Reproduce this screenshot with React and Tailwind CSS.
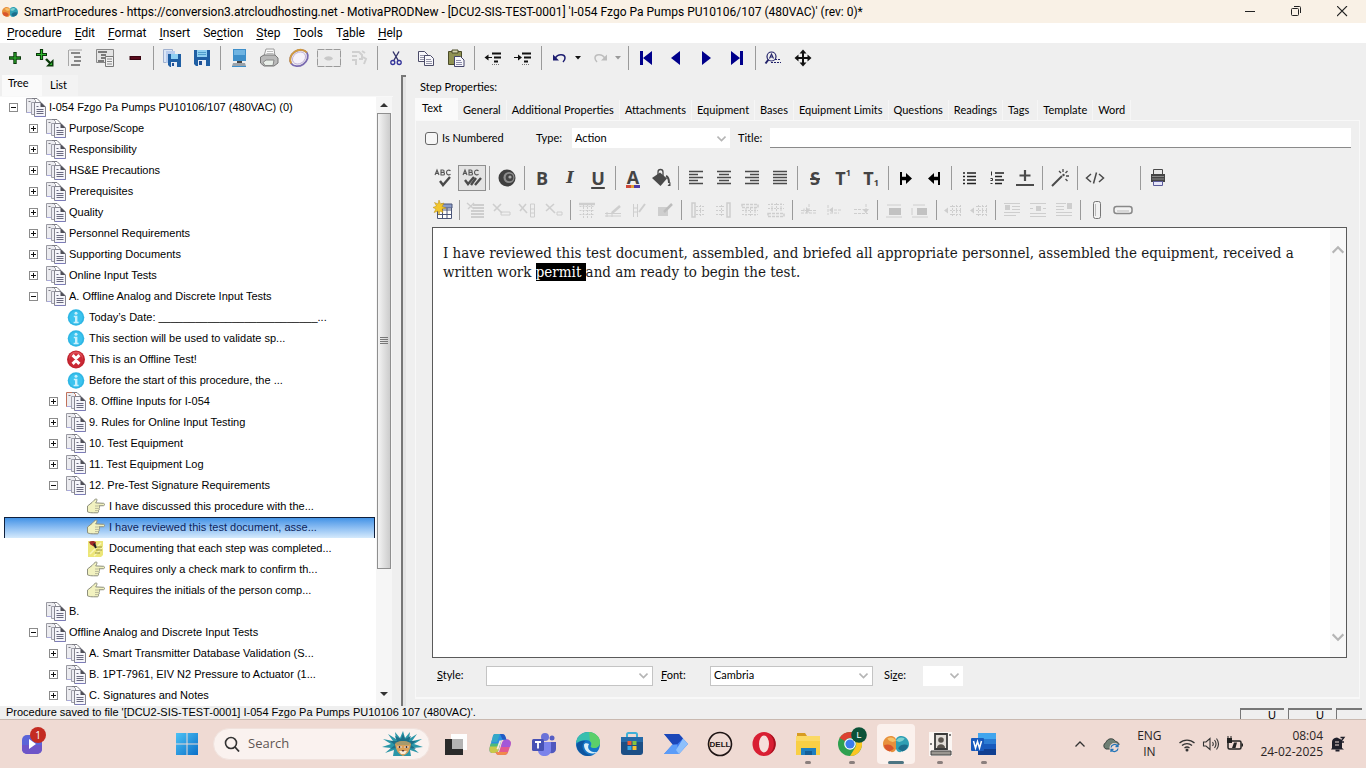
import React from "react";

const TREE = [
  [0, "minus", "doc", "I-054 Fzgo Pa Pumps PU10106/107 (480VAC) (0)"],
  [1, "plus", "doc", "Purpose/Scope"],
  [1, "plus", "doc", "Responsibility"],
  [1, "plus", "doc", "HS&E Precautions"],
  [1, "plus", "doc", "Prerequisites"],
  [1, "plus", "doc", "Quality"],
  [1, "plus", "doc", "Personnel Requirements"],
  [1, "plus", "doc", "Supporting Documents"],
  [1, "plus", "doc", "Online Input Tests"],
  [1, "minus", "doc", "A. Offline Analog and Discrete Input Tests"],
  [2, "", "info", "Today’s Date: __________________________..."],
  [2, "", "info", "This section will be used to validate sp..."],
  [2, "", "stop", "This is an Offline Test!"],
  [2, "", "info", "Before the start of this procedure, the ..."],
  [2, "plus", "docred", "8. Offline Inputs for I-054"],
  [2, "plus", "doc", "9. Rules for Online Input Testing"],
  [2, "plus", "doc", "10. Test Equipment"],
  [2, "plus", "doc", "11. Test Equipment Log"],
  [2, "minus", "doc", "12. Pre-Test Signature Requirements"],
  [3, "", "hand", "I have discussed this procedure with the..."],
  [3, "", "hand", "I have reviewed this test document, asse...", true],
  [3, "", "note", "Documenting that each step was completed..."],
  [3, "", "hand", "Requires only a check mark to confirm th..."],
  [3, "", "hand", "Requires the initials of the person comp..."],
  [1, "", "doc", "B."],
  [1, "minus", "doc", "Offline Analog and Discrete Input Tests"],
  [2, "plus", "doc", "A. Smart Transmitter Database Validation (S..."],
  [2, "plus", "doc", "B. 1PT-7961, EIV N2 Pressure to Actuator (1..."],
  [2, "plus", "doc", "C. Signatures and Notes"],
];

const INDENT = ["pl-2", "pl-7", "pl-12", "pl-[68px]"];

function Svg({ size = 20, children, className = "" }) {
  return (
    <svg width={size} height={size} viewBox={`0 0 ${size} ${size}`} className={`shrink-0 ${className}`} fill="none" aria-hidden="true">
      {children}
    </svg>
  );
}

function TreeIcon({ kind }) {
  if (kind === "info")
    return (
      <Svg>
        <circle cx="10" cy="9.500" r="8.300" fill="#2fb6e4" />
        <circle cx="10" cy="9.500" r="6.600" fill="#3cc3ee" />
        <circle cx="10" cy="5.300" r="1.500" fill="#c9f0fd" />
        <path d="M7.800 7.800h3.600v6h1.200v1.400H7.600v-1.400H9V9.200H7.800z" fill="#c9f0fd" />
      </Svg>
    );
  if (kind === "stop")
    return (
      <Svg>
        <circle cx="10" cy="9.500" r="9" fill="#c0232e" />
        <circle cx="10" cy="8.500" r="7" fill="#e0505a" />
        <circle cx="10" cy="10.500" r="7" fill="#cb2935" />
        <path d="M6.600 5.100 10 8.500l3.400-3.400M6.600 13.900 10 10.500l3.400 3.400M10 8.500v2" stroke="#fff" strokeWidth="3" />
      </Svg>
    );
  if (kind === "hand")
    return (
      <Svg>
        <path
          d="M1.500 9 6 5.500c1-1 3-3.600 4.200-3.600 1.200 0 .8 2.500-.6 4l8 .4c1.200.1 1.200 2.300 0 2.400l-4.600.1c.8.6.8 2-.1 2.400.6.8.4 2-.5 2.300.4.9 0 2.300-1 2.300H7.500c-2 0-3.600 0-6-1z"
          fill="#f2f2c0"
          stroke="#8d8f7c"
        />
        <path d="M9 9h3.600M9 11.400h3.300M9 13.600h2.800" stroke="#a9aa90" strokeWidth=".8" />
      </Svg>
    );
  if (kind === "note")
    return (
      <Svg>
        <path d="M2 2h15v14l-2 2H2z" fill="#ece678" />
        <path d="M4 15 15 4M8 17l9-9" stroke="#f9f6b8" strokeWidth="1.500" />
        <path d="M11 8h5M10 11h6M9 14h5" stroke="#9a9440" />
        <path d="M3 3c2-1.500 6-1.500 7 .5L8.500 8 4.500 5.500z" fill="#a12a2a" />
        <path d="M8 4.500 10 9" stroke="#222" strokeWidth="2" />
      </Svg>
    );
  const edge = kind === "docred" ? "#c0705a" : "#9a9aa2";
  return (
    <Svg>
      <path d="M.5.5h7l2 2v12h-9z" fill="#ececf0" stroke={edge} />
      <path d="M2.500 3.500h2" stroke="#77777f" />
      <path d="M1 14.500h5" stroke="#a9a9dc" />
      <path d="M6 .5h5l3.500 3.500v3" stroke="#7c7c84" />
      <path d="M5.500 4.500h4v12h-4z" fill="#ececf2" stroke="#a0a0aa" />
      <path d="M8.500 4.500h6.500l4.500 4.500v9.500h-11z" fill="#f5f5fa" stroke="#85858f" />
      <path d="M14.500 4v5h5z" fill="#4f4f58" />
      <path d="M10.500 8.500h2M10.500 11.500h7M10.500 13.500h7M10.500 15.500h7" stroke="#6a6a80" />
      <path d="M9 18.500h10.500" stroke="#7c7cb8" />
    </Svg>
  );
}

function TreeRow({ level, box, kind, text, selected }) {
  return (
    <li
      role="treeitem"
      aria-selected={!!selected}
      className={`ml-1 flex h-[21px] shrink-0 items-center whitespace-nowrap border-x border-t ${
        selected ? "border-[#10203c] bg-linear-to-b from-[#4293e6] to-[#d5eafc] pb-px text-[#0c1f5c]" : "border-transparent pb-px text-black"
      }`}
    >
      <div className={`-ml-[5px] flex items-center ${INDENT[level]}`}>
        <button type="button" aria-label={box ? "Toggle branch" : "Item"} className={`flex size-[10px] items-center justify-center ${box ? "" : "invisible"}`}>
          <Svg size={9}>
            <rect x=".5" y=".5" width="8" height="8" fill="#fff" stroke="#8b8b8b" />
            <path d={box === "plus" ? "M2 4.500h5M4.500 2v5" : "M2 4.500h5"} stroke="#111" />
          </Svg>
        </button>
        <span className="ml-2 mr-[3px] flex">
          <TreeIcon kind={kind} />
        </span>
        <span>{text}</span>
      </div>
    </li>
  );
}

function Logo({ size = 18 }) {
  return (
    <svg width={size} height={size} viewBox="0 0 24 24" className="shrink-0" aria-hidden="true">
      <path d="M0 12c0-4 3-7.500 7-7.500 3 0 5 1.500 5 4v8c-1 2-2 3-4 3-1-1-2 0-3-1-3-1-5-3-5-6.500z" fill="#e8903c" />
      <path d="M1 13c3-1 7-1 9 3-1 2-4 3-5 2.500-2.500-1-4-3-4-5.500z" fill="#d9552c" />
      <path d="M4 7c3-2 6-1 8 2-3 2-6 1-8-2z" fill="#f6c168" />
      <path d="M24 12c0-4-3-7.500-7-7.500-3 0-5 1.500-5 4v8c1 2 2 3 4 3 1-1 2 0 3-1 3-1 5-3 5-6.500z" fill="#2f9fb4" />
      <path d="M23 13c-3-1-7-1-9 3 1 2 4 3 5 2.500 2.500-1 4-3 4-5.500z" fill="#1c6d8c" />
      <path d="M20 7c-3-2-6-1-8 2 3 2 6 1 8-2z" fill="#7fd0cf" />
    </svg>
  );
}

/* ---------- main toolbar icons ---------- */
const I = {
  add: (<Svg><path d="M10 4v12M4 10h12" stroke="#0a3a0a" strokeWidth="3.400" /><path d="M10 5v10M5 10h10" stroke="#2fb52f" strokeWidth="1.200" /></Svg>),
  addSub: (
    <Svg>
      <path d="M6.500 1v11M1 6.500h11" stroke="#0a3a0a" strokeWidth="3.200" /><path d="M6.500 2v9M2 6.500h9" stroke="#2fb52f" strokeWidth="1.200" />
      <path d="m11 11 5 5" stroke="#0a3a0a" strokeWidth="2.400" /><path d="M18.500 11v7.500H11z" fill="#0a3a0a" /><path d="M17 14.500V17h-2.500z" fill="#2fb52f" />
    </Svg>
  ),
  outline: (<Svg><path d="M4 2h13M3.500 2v16" stroke="#a8a8a8" /><path d="M6 5h9M9 9h7M9 13h7M6 17h9" stroke="#666" strokeWidth="1.500" /></Svg>),
  form: (
    <Svg>
      <path d="M1.500 1.500h17v13h-17z" fill="#e4e4e4" stroke="#8a8a8a" /><path d="M3 4h9M6 7h5M6 10h4M3 13h6" stroke="#555" strokeWidth="1.500" />
      <path d="M10.500 8.500h8v10h-8z" fill="#f1f1f1" stroke="#777" /><path d="M12 11h5M12 13.500h5M12 16h5" stroke="#888" />
    </Svg>
  ),
  minus: (<Svg><path d="M4.500 10h11.500" stroke="#3b0612" strokeWidth="4" /><path d="M6 10h9" stroke="#7a1026" /></Svg>),
  save: (
    <Svg>
      <path d="M2 2h16v16H4l-2-2z" fill="#1f5fa4" /><path d="M5 2h10v7H5z" fill="#8fd0f2" /><path d="M6 4.500h8M6 6.500h8" stroke="#4f9dcc" />
      <path d="M6 12h8v6H6z" fill="#e8edf4" /><path d="M7 13h3v4H7z" fill="#1f4f94" />
    </Svg>
  ),
  saveAll: (
    <Svg>
      <path d="M1.500 1.500h9v13h-9z" fill="#dbe6f6" stroke="#9fb0cf" /><path d="M4 3h9v12H4z" fill="#b9cdee" />
      <path d="M6 6h13v13H8l-2-2z" fill="#1f5fa4" /><path d="M9 6h7v5H9z" fill="#8fd0f2" /><path d="M9 14h6v5H9z" fill="#e8edf4" /><path d="M10 15h2v3h-2z" fill="#1f4f94" />
    </Svg>
  ),
  monitor: (
    <Svg>
      <path d="M4 1h13v12H4z" fill="#3e8fca" /><path d="M5 2h11v5H5z" fill="#6fb4e2" /><path d="M8 13h5v2H8z" fill="#444" /><path d="M4 15h12l1 3H3z" fill="#9ba3aa" /><path d="M3 18.500h14" stroke="#3e8fca" />
    </Svg>
  ),
  print: (
    <Svg>
      <path d="M5 8 7 1h8l1 7z" fill="#fafafa" stroke="#9a9a9a" /><path d="M8 3.500h6M7.500 5.500h7" stroke="#bbb" />
      <path d="M1.500 9 5 7h11l3 3v5l-4 3H5l-3.500-3z" fill="#b9b9b9" stroke="#777" /><path d="M4 14.500 7 12h8l-1 5.500H6z" fill="#e9efe9" stroke="#888" />
    </Svg>
  ),
  ring: (
    <Svg size={22}>
      <g transform="rotate(-35 11 11)">
        <ellipse cx="11" cy="11" rx="9.500" ry="7.500" stroke="#7a6ab0" strokeWidth="1.800" />
        <path d="M1.500 11c0-4 4-7.500 9.500-7.500s9.500 3.500 9.500 7.500" stroke="#d39b3c" strokeWidth="1.800" />
        <ellipse cx="11" cy="11" rx="7" ry="5.500" fill="#f6f2fa" stroke="#b9a9d2" strokeWidth=".8" />
      </g>
    </Svg>
  ),
  panel: (<svg width="26" height="20" viewBox="0 0 26 20" fill="none" aria-hidden="true"><path d="M1.500 1.500h23v17h-23z" fill="#ececec" stroke="#9a9a9a" strokeDasharray="7 1" /><path d="M8 10.500c2-3 7-3 9 0-2 3-7 2.500-9 0z" fill="#c8c8c8" /></svg>),
  runner: (<Svg><path d="M3 4h7l3 3v4h-3M3 8h5M3 12h4v5M13 3l3 2M14 9l3 2-2 5" stroke="#d0d0d0" strokeWidth="2" /></Svg>),
  cut: (
    <Svg>
      <path d="M7 3.500 12.500 13M13 3.500 7.500 13" stroke="#33336a" strokeWidth="1.400" /><circle cx="6.800" cy="14.500" r="2" stroke="#33339a" strokeWidth="1.300" /><circle cx="13.200" cy="14.500" r="2" stroke="#33339a" strokeWidth="1.300" />
    </Svg>
  ),
  copy: (
    <Svg>
      <path d="M2.500 3.500h6l3 3v7h-9z" fill="#f8f8fc" stroke="#4c4c68" /><path d="M4 7.500h5M4 9.500h5M4 11.500h5" stroke="#9595a8" />
      <path d="M8.500 7.500h6l3 3v7h-9z" fill="#f8f8fc" stroke="#4c4c68" /><path d="M10 11.500h5M10 13.500h6M10 15.500h6" stroke="#9595a8" />
    </Svg>
  ),
  paste: (
    <Svg>
      <path d="M2.500 3.500h13v13h-13z" fill="#8f9152" stroke="#4a4b28" /><path d="M6 2h6v3H6z" fill="#d5d5b0" stroke="#4a4b28" />
      <path d="M8.500 8.500h6l3.500 3.500v6.500H8.500z" fill="#f8f8fc" stroke="#44446a" /><path d="M10 12.500h5M10 14.500h6M10 16.500h6" stroke="#8a8aa8" />
    </Svg>
  ),
  outdent: (<Svg><path d="M9 5.500h9M11 9.500h7M11 13.500h4" stroke="#111" strokeWidth="2" /><path d="M9 16.500h7" stroke="#777" strokeDasharray="1 1" /><path d="M3 9.500h6" stroke="#111" /><path d="m5.500 6.500-4 3 4 3z" fill="#111" /></Svg>),
  indent: (<Svg><path d="M9 5.500h9M11 9.500h7M11 13.500h4" stroke="#111" strokeWidth="2" /><path d="M9 16.500h7" stroke="#777" strokeDasharray="1 1" /><path d="M1 9.500h6" stroke="#111" /><path d="m5 6.500 4 3-4 3z" fill="#111" /></Svg>),
  undo: (<Svg><path d="M5 10.500C8 5 15 6 15 10c0 2-1 3-2 4" stroke="#1d1d70" strokeWidth="1.500" /><path d="M3 6.500v6h6z" fill="#1d1d70" /></Svg>),
  redo: (<Svg><path d="M15 10.500C12 5 5 6 5 10c0 2 1 3 2 4" stroke="#bdbdbd" strokeWidth="1.500" /><path d="M17 6.500v6h-6z" fill="#bdbdbd" /></Svg>),
  first: (<Svg><path d="M3 3h3v14H3zM15 3v14l-9-7z" fill="#00008b" /></Svg>),
  prev: (<Svg><path d="M13 3v14l-9-7z" fill="#00008b" /></Svg>),
  next: (<Svg><path d="M5 3v14l9-7z" fill="#00008b" /></Svg>),
  last: (<Svg><path d="M13 3h3v14h-3zM4 3v14l9-7z" fill="#00008b" /></Svg>),
  find: (
    <Svg>
      <circle cx="7.500" cy="8.500" r="4.500" stroke="#22226a" strokeWidth="1.200" /><path d="m4.500 11.500-3 4" stroke="#22226a" strokeWidth="2" /><path d="M5.500 10.500 7.500 6l2 4.500M6.300 9h2.400" stroke="#22226a" strokeWidth="1.100" /><path d="M11 11.500h6M7 14.500h10" stroke="#22226a" strokeDasharray="2 1" />
    </Svg>
  ),
  move: (<Svg><path d="M9 4v12M3 10h12" stroke="#111" strokeWidth="2" /><path d="m9 1.500 3.500 4h-7zM9 18.500l3.500-4h-7zM.5 10l4-3.500v7zM17.500 10l-4-3.500v7z" fill="#111" /></Svg>),
};

function Sep({ tall }) {
  return (
    <span className="flex w-[7px] shrink-0 justify-center" aria-hidden="true">
      <span className={`w-px bg-[#9a9a9a] ${tall ? "h-6" : "h-5"}`} />
    </span>
  );
}

function Caret({ color, label }) {
  return (
    <button type="button" aria-label={label} className="flex w-[10px] items-center">
      <svg width="6" height="4" viewBox="0 0 6 4" aria-hidden="true"><path d="M0 0h6L3 3.500z" fill={color} /></svg>
    </button>
  );
}

const MAIN = [
  ["Add step", "add"], ["Add child step", "addSub"], ["Outline", "outline"], ["Form view", "form"], ["Delete", "minus"], null,
  ["Save all", "saveAll"], ["Save", "save"], null,
  ["Preview", "monitor"], ["Print", "print"], ["Validate", "ring"], ["Panel", "panel"], ["Run", "runner"], null,
  ["Cut", "cut"], ["Copy", "copy"], ["Paste", "paste"], null,
  ["Outdent", "outdent"], ["Indent", "indent"], null,
  ["Undo", "undo", "#111"], ["Redo", "redo", "#999"], null,
  ["First", "first"], ["Previous", "prev"], ["Next", "next"], ["Last", "last"], null,
  ["Find", "find"], ["Move", "move"],
];

/* ---------- editor toolbar icons ---------- */
const D = "#4a4a4a";
const abc = (
  <g stroke="#555" strokeWidth="1.100" fill="none">
    <path d="M1 7l2-5 2 5M1.700 5.400h2.600M7 2v5h2.200a1.300 1.300 0 0 0 0-2.600H7h1.900a1.200 1.200 0 0 0 0-2.400zM16.500 2.800c-1.500-1.200-4-.6-4 1.700s2.500 2.900 4 1.700" />
  </g>
);
const bars = (rows) => (
  <Svg><path d={rows.map(([a, b], i) => `M${a} ${3.5 + i * 3}H${b}`).join("")} stroke={D} strokeWidth="1.500" /></Svg>
);
const Glyph = ({ children, className = "" }) => <span className={`text-[18px] leading-5 text-[#444] ${className}`}>{children}</span>;

const E = {
  spell: (<Svg>{abc}<path d="m6 13 3 4 7-8" stroke={D} strokeWidth="2.400" /></Svg>),
  spellAll: (<Svg>{abc}<path d="m3 12 3 4 6-7" stroke={D} strokeWidth="2.400" /><path d="m9 17 5-7M13 17l6-7" stroke={D} strokeWidth="2.400" /></Svg>),
  sound: (
    <Svg>
      <circle cx="10" cy="10" r="8.500" fill="#3f3f3f" /><circle cx="12" cy="9.500" r="5.500" fill="#8c8c8c" /><circle cx="12.500" cy="9.500" r="3.800" fill="#444" /><circle cx="13" cy="9" r="1.600" fill="#aaa" />
    </Svg>
  ),
  bold: <Glyph className="font-bold">B</Glyph>,
  italic: <span className="font-['DejaVu_Serif'] text-[16px] font-bold italic leading-5 text-[#444]">I</span>,
  underline: <Glyph className="font-bold underline decoration-2 underline-offset-2">U</Glyph>,
  color: (
    <span className="flex flex-col items-center">
      <span className="text-[18px] font-bold leading-4 text-[#444]">A</span>
      <svg width="14" height="3" viewBox="0 0 14 3" aria-hidden="true"><path d="M0 0h5v3H0z" fill="#d04a3a" /><path d="M5 0h3v3H5z" fill="#e2a035" /><path d="M8 0h6v3H8z" fill="#4a3aa8" /></svg>
    </span>
  ),
  fill: (
    <Svg>
      <path d="M1 10 9 4.500l7 6-6.500 7.500z" fill={D} /><path d="M7 9V4a2.500 2.500 0 0 1 5 0v4" stroke={D} strokeWidth="1.300" /><path d="M15 8c2.500 1 3 4 3 7" stroke={D} strokeWidth="2" /><path d="M16.500 18h3v-4z" fill={D} />
    </Svg>
  ),
  left: bars([[3, 17], [3, 12], [3, 17], [3, 12], [3, 17]]),
  center: bars([[3, 17], [5, 15], [3, 17], [5, 15], [3, 17]]),
  right: bars([[3, 17], [8, 17], [3, 17], [8, 17], [3, 17]]),
  justify: bars([[3, 17], [3, 17], [3, 17], [3, 17], [3, 17]]),
  strike: <Glyph className="font-bold line-through decoration-2">S</Glyph>,
  sup: <span className="flex text-[18px] font-bold leading-5 text-[#444]">T<span className="text-[9px] leading-[10px]">1</span></span>,
  sub: <span className="flex items-end text-[18px] font-bold leading-5 text-[#444]">T<span className="text-[9px] leading-[10px]">1</span></span>,
  inc: (<Svg><path d="M5 4v13" stroke="#000" strokeWidth="2" /><path d="M6 10.500h6" stroke="#000" strokeWidth="3.500" /><path d="m10 5 6 5.500-6 5.500z" fill="#000" /></Svg>),
  dec: (<Svg><path d="M15 4v13" stroke="#000" strokeWidth="2" /><path d="M14 10.500H8" stroke="#000" strokeWidth="3.500" /><path d="m10 5-6 5.500 6 5.500z" fill="#000" /></Svg>),
  ul: (<Svg><path d="M4 5h2M4 8.500h2M4 12h2M4 15.500h2M8 5h9M8 8.500h9M8 12h9M8 15.500h9" stroke="#222" strokeWidth="1.400" /></Svg>),
  ol: (<Svg><path d="M4.500 3.500v4M3.500 10.500h2v2h-2M3.500 15.500h2" stroke="#333" /><path d="M8 5h9M8 8.500h7M8 12h9M8 15.500h7" stroke="#222" strokeWidth="1.400" /></Svg>),
  hr: (<Svg><path d="M10 2v11M4.500 7.500h11" stroke={D} strokeWidth="2.200" /><path d="M1 17h18" stroke={D} strokeWidth="2" /></Svg>),
  wand: (<Svg><path d="M2 18 12 8" stroke={D} strokeWidth="2" /><path d="M13 1v3M17.500 3l-2 2M19 8h-3M17.500 13l-2-2M9 3l2 2" stroke={D} strokeWidth="1.300" /><circle cx="13.500" cy="7" r="1.200" fill={D} /></Svg>),
  code: (<Svg><path d="M6 6 1.500 10 6 14M14 6l4.500 4-4.500 4M11.500 4.500l-3 11" stroke={D} strokeWidth="1.500" /></Svg>),
  print: (
    <Svg>
      <path d="M5.500 1.500h9v5h-9z" fill="#e8e8e8" stroke={D} /><path d="M3 6h14v8H3z" fill="#444" /><path d="M4 8.500h12M4 11h12" stroke="#888" /><path d="M5.500 13.500h9v4h-9z" fill="#e6e6fa" stroke="#5b5b9a" />
    </Svg>
  ),
};

const ROW1 = [
  ["Spelling", "spell"], ["Spell as you type", "spellAll", true], null, ["Sound", "sound"], null,
  ["Bold", "bold"], ["Italic", "italic"], ["Underline", "underline"], null, ["Font color", "color"], ["Fill color", "fill"], null,
  ["Align left", "left"], ["Center", "center"], ["Align right", "right"], ["Justify", "justify"], null,
  ["Strikethrough", "strike"], ["Superscript", "sup"], ["Subscript", "sub"], null, ["Increase indent", "inc"], ["Decrease indent", "dec"], null,
  ["Bulleted list", "ul"], ["Numbered list", "ol"], ["Horizontal rule", "hr"], null, ["Clean formatting", "wand"], null,
  ["Source", "code"], ["Blank", ""], null, ["Print text", "print"],
];

const g = "#cecece";
const gridPath = "M2.500 6.500h15M2.500 10.500h15M2.500 14.500h15M6.500 4v14M10.500 4v14M14.500 4v14";
const T = {
  newTable: (
    <Svg>
      <path d="M4 4h15v15H4z" fill="#fff" /><path d="M4.500 4.500h14v14h-14zM4.500 10h14M4.500 14.500h14M9.500 6v13M14 6v13" stroke="#4a5578" /><path d="M8 4h11v4H8z" fill="#8a9cc8" stroke="#4a5578" />
      <path d="m6 0 1.500 4L11 3 9 6.500 13 8 9 9l1 3.500L7 11l-1 4-1-4-4 1.500L3 9 0 7.500 3.500 6 1.500 2.500 5 4z" fill="#f2c62c" stroke="#b98c10" strokeWidth=".5" />
    </Svg>
  ),
  rows: (<Svg><path d="M7 5h11M7 8h11M5 11h13M5 14h13M5 17h13" stroke={g} strokeWidth="2.200" /><path d="m1 3 7 6M8 3 2 9" stroke={g} strokeWidth="1.400" /></Svg>),
  delRow: (<Svg><path d="m1 4 9 9M9 4l-7 7" stroke={g} strokeWidth="1.600" /><path d="M9 12h9v3H9z" stroke={g} /></Svg>),
  delCol: (<Svg><path d="m1 4 8 9M8 4l-6 7" stroke={g} strokeWidth="1.600" /><path d="M12.500 4v13h4V4zM12 9h5M12 13h5" stroke={g} /></Svg>),
  delCell: (<Svg><path d="m2 4 9 9M10 4l-8 7" stroke={g} strokeWidth="1.600" /><path d="M13 12h5v3h-5z" stroke={g} /></Svg>),
  props: (<Svg><path d={gridPath} stroke={g} strokeDasharray="2 1" /><path d="M2 4h16" stroke={g} strokeWidth="2.500" /></Svg>),
  rowProps: (<Svg><path d="M2 13.500h16M2 16h16M4 12v5M9 12v5" stroke={g} /><path d="m9 13 8-7" stroke={g} strokeWidth="2.500" /></Svg>),
  colProps: (<Svg><path d="M4.500 4v13M8.500 4v13M4 8h5M4 12h5" stroke={g} /><path d="m10 12 6-8" stroke={g} strokeWidth="2" /></Svg>),
  cellProps: (<Svg><path d="M3 7h10v9H3z" fill={g} /><path d="m9 12 8-8" stroke="#bdbdbd" strokeWidth="2.500" /></Svg>),
  colL: (<Svg><path d="M8 6.500h9M8 10.500h9M8 14.500h9M12.500 5v12" stroke={g} strokeDasharray="2 1" /><path d="M4 3h3v14H4z" stroke={g} strokeWidth="1.500" /></Svg>),
  colR: (<Svg><path d="M2 6.500h9M2 10.500h9M2 14.500h9M7.500 5v12" stroke={g} strokeDasharray="2 1" /><path d="M13 3h3v14h-3z" stroke={g} strokeWidth="1.500" /></Svg>),
  rowT: (<Svg><path d="M2 10.500h16M2 14.500h16M6 8v8M10.500 8v8M15 8v8" stroke={g} strokeDasharray="2 1" /><path d="M2 4.500h16v3H2z" stroke={g} strokeWidth="1.500" strokeDasharray="3 1" /></Svg>),
  rowB: (<Svg><path d="M2 4.500h16M2 8.500h16M6 3v8M10.500 3v8M15 3v8" stroke={g} strokeDasharray="2 1" /><path d="M2 13.500h16v3H2z" stroke={g} strokeWidth="1.500" strokeDasharray="3 1" /></Svg>),
  mergeA: (<Svg><path d="M2 10.500h16M10 4v9M5 8.500v4M2 13h16" stroke={g} strokeDasharray="3 1" /><path d="m7 7 4 3.500-4 3z" fill={g} /></Svg>),
  mergeB: (<Svg><path d="M3 5v10M5 10h12M5 13h9" stroke={g} strokeDasharray="3 1" /><path d="m8 7-4 3 4 3z" fill={g} /></Svg>),
  mergeC: (<Svg><path d="M3 9.500h8M3 13.500h14M15 4v9" stroke={g} strokeDasharray="3 1" /><path d="m11 9 4 4 3-4z" fill={g} /></Svg>),
  block: (<Svg><path d="M3 5h14M2 17h16" stroke={g} /><path d="M5 8h12v7H5z" fill="#c2c2c2" /></Svg>),
  block2: (<Svg><path d="M3 5h12M2 17h16M2 8v7" stroke={g} /><path d="M7 8h10v7H7z" fill="#c2c2c2" /></Svg>),
  shift: (<Svg><path d="M7 6.500h12M7 10.500h12M7 14.500h12M9.500 5v11M13.500 5v11M17.500 5v11" stroke={g} strokeDasharray="2 1" /><path d="m1 10.500 4-3v6z" fill={g} /></Svg>),
  wrapL: (<Svg><path d="M2 3.500h16M10 6.500h8M10 9.500h8M2 12.500h16M2 15.500h12" stroke={g} /><path d="M3 5h5v5H3z" fill={g} /></Svg>),
  wrapC: (<Svg><path d="M2 3.500h16M2 13.500h16M2 16.500h16M2 8.500h3M15 8.500h3" stroke={g} /><path d="M8 6h5v5H8z" fill={g} /></Svg>),
  wrapR: (<Svg><path d="M2 3.500h10M2 6.500h8M2 9.500h8M2 12.500h16M2 15.500h16" stroke={g} /><path d="M13 3h5v6h-5z" fill={g} /></Svg>),
  vbox: (<Svg><rect x="6.500" y="1.500" width="7" height="17" rx="2" fill="#f2f2f2" stroke="#777" /><path d="M8.500 4v12" stroke="#bbb" /></Svg>),
  hbox: (<Svg><rect x="1" y="6.500" width="18" height="7" rx="2.500" fill="#f2f2f2" stroke="#888" strokeWidth="1.500" /><path d="M4 11h12" stroke="#bbb" /></Svg>),
};

const ROW2 = [
  ["Insert table", "newTable"], null, ["Delete table", "rows"], ["Delete row", "delRow"], ["Delete column", "delCol"], ["Delete cell", "delCell"], null,
  ["Table properties", "props"], ["Row properties", "rowProps"], ["Column properties", "colProps"], ["Cell properties", "cellProps"], null,
  ["Column left", "colL"], ["Column right", "colR"], ["Row above", "rowT"], ["Row below", "rowB"], null,
  ["Merge right", "mergeA"], ["Merge left", "mergeB"], ["Merge down", "mergeC"], null, ["Block", "block"], ["Inline block", "block2"], null,
  ["Shift left", "shift"], ["Shift right", "shift"], null, ["Wrap left", "wrapL"], ["Wrap center", "wrapC"], ["Wrap right", "wrapR"], null,
  ["Vertical frame", "vbox"], ["Horizontal frame", "hbox"],
];

function Chevron({ className = "", up = false, w = 9 }) {
  return (
    <svg width={w} height={w} viewBox="0 0 9 9" fill="none" className={className} aria-hidden="true">
      <path d={up ? "m.5 6.500 4-4 4 4" : "m.5 2.500 4 4 4-4"} stroke="#b5b5b5" strokeWidth="1.600" />
    </svg>
  );
}

function Select({ id, value, className }) {
  return (
    <span className={`relative flex h-5 items-center bg-white ${className}`}>
      <select id={id} defaultValue={value} className="h-full w-full appearance-none bg-transparent pl-[3px] text-black outline-none">
        <option>{value}</option>
      </select>
      <Chevron className="pointer-events-none absolute right-1" />
    </span>
  );
}

/* ---------- taskbar icons ---------- */
const S = ({ children }) => <svg width="26" height="26" viewBox="0 0 26 26" fill="none" aria-hidden="true">{children}</svg>;

const TASKS = [
  ["Task view", <S><path d="M8 3h16v16H8z" fill="#fdfdfd" /><path d="M9 8h11v11H9z" fill="#b3b3b3" /><path d="M2 8h7v10h11v6H2z" fill="#2a2a2a" /></S>],
  ["Copilot", (
    <S>
      <path d="M8 3h7c2 0 3 1 3.500 3l1 3h-5l-3 10c-.6 2-1.500 3-3.500 3H6c-3 0-4-2-3.500-5l3-10C6 4.500 6.500 3 8 3z" fill="#2a8fe0" />
      <path d="M4.300 11 5.500 7C6 4.500 6.500 3 8 3h5l-3 8z" fill="#35a8c8" />
      <path d="M3 15h9.500l-1 4c-.6 2-1.500 3-3.500 3H6c-3 0-4-2-3.500-5z" fill="#c8c84a" /><path d="M3.800 12.500h9.400l-.8 3H2.900z" fill="#4dbb7a" />
      <path d="M19.500 8.500c3.500 0 5 2 4 5.500l-2 6c-1 3-2 4-4.500 4h-5c-2 0-3-1-3.500-3H12l3-9c1-2.500 2-3.500 4.500-3.500z" fill="#e2588f" />
      <path d="M19.500 8.500c3.500 0 5 2 4 5.500l-.5 2H14l1-4c1-2.500 2-3.500 4.500-3.500z" fill="#a258d8" /><path d="M9 21h12c-1 2-2 3-4 3h-5c-2 0-3-1-3-3z" fill="#f08a4b" />
      <path d="M13 3h2c2 0 3 1 3.500 3l1 2.500h-4z" fill="#2459c4" />
      <path d="m12.500 9.500 1.800 0-3 9-1.800-.5z" fill="#f6e8e4" />
    </S>
  )],
  ["Teams", (
    <S>
      <circle cx="14" cy="6" r="4" fill="#6a72d8" /><circle cx="21" cy="7" r="2.500" fill="#565ec4" /><path d="M17 11h8v7c0 3-3 5-6 4z" fill="#5058be" /><path d="M7 11h13v8c0 4-3 6-6.500 6S7 23 7 19z" fill="#7b83eb" />
      <rect x="1" y="8" width="12" height="12" rx="1.500" fill="#4650b4" /><path d="M4 11h6M7 11v6.500" stroke="#fff" strokeWidth="1.800" />
    </S>
  )],
  ["Edge", (
    <S>
      <circle cx="13" cy="13" r="12" fill="#1576c8" /><path d="M1 12C2 5 7 1 13 1c7 0 12 5 12 10 0 4-3 6-6 6-2 0-4-1-3-2.500C17 12 15 9 11 9c-5 0-9 3-10 3z" fill="#37bfae" />
      <path d="M14 1.100C20 1.300 25 6 25 11c0 4-3 6-6 6-2 0-4-1-3-2.500 1-1 1-3-1-4.500z" fill="#5ccf6a" /><path d="M9 14c0 5 4 9 9 8.500 2 0 4-1 5-2-2 1-6 1-8-1-2-1.500-2.500-4-1-6.500-2-1-5-1-5 1z" fill="#d9eef8" /><path d="M1.500 14c1-3 5-5 9-4-3 2-4 6-2 9 2 4 6 5.500 9 5-7 3-15-1-16-10z" fill="#0e559f" />
    </S>
  )],
  ["Store", (
    <S>
      <path d="M8 6V3.500C8 2.500 8.500 2 9.500 2h7c1 0 1.500.5 1.500 1.500V6" stroke="#3fb0d8" strokeWidth="2" /><path d="M2 6h22v15c0 2-1 3-3 3H5c-2 0-3-1-3-3z" fill="#1c4f86" /><path d="M2 6h22v5H2z" fill="#256aa8" />
      <path d="M8.500 10h4v4h-4z" fill="#ef5b34" /><path d="M13.500 10h4v4h-4z" fill="#84c440" /><path d="M8.500 15h4v4h-4z" fill="#36a8e8" /><path d="M13.500 15h4v4h-4z" fill="#f7c132" />
    </S>
  )],
  ["Power Automate", <S><path d="M1 3h15l9 10-9 10H1l9-10z" fill="#3d7cf0" /><path d="M1 3h15l4 4.500-6 6H9.500z" fill="#1c47b8" /><path d="M16 23H1l8-9 5-.5z" fill="#5b9cf8" /><path d="m20 7.500 5 5.500-9 10-3-4z" fill="#8ec0fb" /></S>],
  ["Dell", (
    <svg width="26" height="26" viewBox="0 0 26 26" aria-hidden="true">
      <circle cx="13" cy="13" r="11.500" fill="none" stroke="#1d1414" strokeWidth="1.600" />
      <text x="13" y="16" textAnchor="middle" fontFamily="Liberation Sans" fontWeight="bold" fontSize="8" fill="#1d1414">DELL</text>
    </svg>
  )],
  ["Opera", <S><ellipse cx="13" cy="13" rx="11.500" ry="12" fill="#d91f33" /><path d="M18 3c6 4 7 15 0 20 9-3 9-17 0-20z" fill="#a3121f" /><ellipse cx="13" cy="13" rx="5" ry="8.500" fill="#f6dedb" /></S>],
  ["File Explorer", <S><path d="M2 2h8l2 3v4H2z" fill="#d79b22" /><path d="M1 5h24v19H1z" fill="#f9cf45" /><path d="M1 5h24v5H1z" fill="#fbd965" /><path d="M6 17h15v7H6z" fill="#1f7fc0" /><path d="M10 20h7v4h-7z" fill="#155e97" /></S>, true],
  ["Chrome", (
    <svg width="30" height="30" viewBox="0 0 30 30" aria-hidden="true">
      <circle cx="13" cy="17" r="12" fill="#2ea04f" /><path d="M2.600 11a12 12 0 0 1 20.800 0H13a6 6 0 0 0-5 3z" fill="#dd4132" /><path d="M23.400 11A12 12 0 0 1 13 29l5.500-9a6 6 0 0 0-2-8z" fill="#fbc622" />
      <circle cx="13" cy="17" r="5.800" fill="#fff" /><circle cx="13" cy="17" r="4.600" fill="#3b7ded" /><circle cx="22" cy="8" r="7.800" fill="#0c5238" />
      <text x="22" y="11" textAnchor="middle" fontFamily="Liberation Sans" fontSize="9" fill="#fff">L</text>
    </svg>
  ), true],
  ["SmartProcedures", <Logo size={26} />, "active"],
  ["Assistant", (
    <S>
      <path d="M2 1h23v24H2z" fill="#fbf6f3" /><path d="M8 3h12v15H8z" fill="#e2ddd8" stroke="#3a3a3a" strokeWidth="1.800" /><circle cx="14" cy="9" r="2.800" fill="#5a544e" /><path d="M10 17c0-5 8-5 8 0z" fill="#5a544e" /><path d="M4 20h20v4H4z" fill="#9a9690" stroke="#444" /><circle cx="4" cy="13" r="1" fill="#555" /><circle cx="23" cy="4" r="1" fill="#555" />
    </S>
  ), true],
  ["Word", (
    <S>
      <path d="M7 2h18v22H7z" fill="#2b7cd3" /><path d="M7 2h18v6H7z" fill="#41a5ee" /><path d="M7 13h18v5H7z" fill="#185abd" /><path d="M7 18h18v6H7z" fill="#103f91" /><rect x="0" y="7" width="13" height="13" rx="1" fill="#185abd" />
      <path d="m2.500 10 2 7 2-6.500 2 6.500 2-7" stroke="#fff" strokeWidth="1.500" />
    </S>
  ), true],
];

const MENUS = [["", "P", "rocedure"], ["", "E", "dit"], ["", "F", "ormat"], ["", "I", "nsert"], ["Se", "c", "tion"], ["", "S", "tep"], ["", "T", "ools"], ["T", "a", "ble"], ["", "H", "elp"]];
const TABS = ["General", "Additional Properties", "Attachments", "Equipment", "Bases", "Equipment Limits", "Questions", "Readings", "Tags", "Template", "Word"];

export default function App() {
  return (
    <div className="flex h-screen flex-col overflow-hidden bg-[#efefef] font-['Lato','Liberation_Sans',sans-serif] text-[11px] text-black">
      <header className="flex h-[23px] shrink-0 items-center bg-[#f9f1e6] pl-[2px] font-['Roboto',sans-serif] text-[12px]">
        <Logo size={16} />
        <h1 className="ml-[6px] whitespace-nowrap">
          SmartProcedures - https://conversion3.atrcloudhosting.net - MotivaPRODNew - [DCU2-SIS-TEST-0001] 'I-054 Fzgo Pa Pumps PU10106/107 (480VAC)' (rev: 0)*
        </h1>
        <div className="ml-auto flex">
          <button type="button" aria-label="Minimize" className="flex w-[46px] justify-center"><Svg size={12}><path d="M0 5.500h10" stroke="#222" /></Svg></button>
          <button type="button" aria-label="Restore" className="flex w-[46px] justify-center"><Svg size={12}><rect x=".5" y="2.500" width="7" height="7" rx="1" stroke="#222" /><path d="M3 .5h5.500q1 0 1 1V7" stroke="#222" /></Svg></button>
          <button type="button" aria-label="Close" className="flex w-[46px] justify-center"><Svg size={12}><path d="m0 0 10 10M10 0 0 10" stroke="#222" strokeWidth="1.100" /></Svg></button>
        </div>
      </header>

      <nav className="flex h-5 shrink-0 items-center gap-[13px] bg-white pl-[7px] font-['Roboto',sans-serif] text-[12px]">
        {MENUS.map(([a, b, c]) => (
          <button key={a + b + c} type="button">{a}<span className="underline underline-offset-2">{b}</span>{c}</button>
        ))}
      </nav>

      <div role="toolbar" aria-label="Main" className="flex h-8 shrink-0 items-center pb-[2px]">
        {MAIN.map((it, i) =>
          it ? (
            <React.Fragment key={i}>
              <button type="button" aria-label={it[0]} className="flex w-[30px] shrink-0 justify-center">{I[it[1]]}</button>
              {it[2] && <Caret color={it[2]} label={`${it[0]} history`} />}
            </React.Fragment>
          ) : (
            <Sep key={i} tall />
          )
        )}
      </div>

      <main className="flex min-h-0 flex-1">
        <aside className="flex w-[393px] shrink-0 flex-col">
          <div role="tablist" className="flex h-[22px] shrink-0 items-stretch border-b border-[#f8f8f8]">
            <button type="button" role="tab" aria-selected="true" className="ml-[2px] w-10 bg-[#fafafa] pb-1 pl-[6px] text-left">Tree</button>
            <button type="button" role="tab" aria-selected="false" className="w-9 bg-[#f3f3f3] pl-2 text-left">List</button>
          </div>
          <div className="mr-px flex min-h-0 flex-1 bg-white">
            <ul role="tree" className="mr-px flex min-w-0 flex-1 flex-col overflow-hidden font-['Liberation_Sans',sans-serif]">
              {TREE.map(([level, box, kind, text, selected], i) => (
                <TreeRow key={i} level={level} box={box} kind={kind} text={text} selected={selected} />
              ))}
            </ul>
            <div className="flex w-4 shrink-0 flex-col items-center bg-[#f6f6f6]">
              <button type="button" aria-label="Scroll up" className="flex h-4 items-center"><svg width="8" height="4" viewBox="0 0 8 4" aria-hidden="true"><path d="M4 0 8 4H0z" fill="#333" /></svg></button>
              <div className="flex w-[14px] flex-[460] items-center justify-center border border-[#8f8f8f] bg-linear-to-r from-[#f4f4f4] to-[#cccccc]">
                <svg width="8" height="8" viewBox="0 0 8 8" aria-hidden="true"><path d="M0 .5h8M0 2.500h8M0 4.500h8M0 6.500h8" stroke="#777" /></svg>
              </div>
              <div className="flex-[114]" />
              <button type="button" aria-label="Scroll down" className="flex h-6 items-center"><svg width="8" height="4" viewBox="0 0 8 4" aria-hidden="true"><path d="M0 0h8L4 4z" fill="#333" /></svg></button>
            </div>
          </div>
        </aside>
        <div className="ml-2 w-[5px] shrink-0 border-l-2 border-t-2 border-[#777] bg-[#e4e4e4]" />

        <section className="flex min-w-0 flex-1 flex-col pl-[9px]">
          <h2 className="ml-[5px] h-[22px] leading-6">Step Properties:</h2>
          <div role="tablist" className="flex h-[23px] shrink-0 items-end">
            <button type="button" role="tab" aria-selected="true" className="flex h-[22px] w-[43px] items-center bg-[#fafafa] pb-[2px] pl-[7px]">Text</button>
            {TABS.map((t) => (
              <button key={t} type="button" role="tab" aria-selected="false" className={`h-5 whitespace-nowrap border-r border-[#f6f6f6] px-[5px] ${t === "Tags" ? "pr-2" : ""}`}>{t}</button>
            ))}
          </div>

          <div role="tabpanel" className="mr-[6px] flex min-h-0 flex-1 flex-col border border-b-2 border-[#f8f8f8] pl-4 pr-2">
            <div className="flex h-9 shrink-0 items-center pb-[2px]">
              <span className="-ml-[7px] flex w-[111px] items-center gap-1">
                <input id="numbered" type="checkbox" className="size-[13px] appearance-none rounded-[3px] border border-[#666] bg-[#f6f6f6]" />
                <label htmlFor="numbered">Is Numbered</label>
              </span>
              <label htmlFor="type" className="w-9">Type:</label>
              <Select id="type" value="Action" className="w-[158px]" />
              <label htmlFor="title" className="ml-2 w-8">Title:</label>
              <input id="title" type="text" className="h-5 min-w-0 flex-1 border-b border-[#8a8a8a] bg-white px-1 outline-none" />
            </div>

            <div role="toolbar" aria-label="Formatting" className="-ml-[2px] mt-1 flex h-[34px] shrink-0 items-center font-['Open_Sans',sans-serif]">
              {ROW1.map((it, i) =>
                it ? (
                  <button key={i} type="button" aria-label={it[0]} className={`flex h-[26px] w-7 shrink-0 items-center justify-center ${it[2] ? "border border-[#8f8f8f] bg-[#e3e3e3]" : ""}`}>{E[it[1]]}</button>
                ) : (
                  <Sep key={i} tall />
                )
              )}
            </div>
            <div role="toolbar" aria-label="Table" className="-ml-[2px] flex h-8 shrink-0 items-center pb-[2px]">
              {ROW2.map((it, i) =>
                it ? (
                  <button key={i} type="button" aria-label={it[0]} className="flex h-6 w-[26px] shrink-0 items-center justify-center">{T[it[1]]}</button>
                ) : (
                  <Sep key={i} />
                )
              )}
            </div>

            <div className="mr-1 flex min-h-0 flex-1 border border-[#5a5a5a] bg-white">
              <div
                role="textbox"
                aria-multiline="true"
                aria-label="Step text"
                contentEditable
                suppressContentEditableWarning
                spellCheck={false}
                className="min-w-0 flex-1 px-[10px] pt-4 font-['DejaVu_Serif_Condensed','DejaVu_Serif',serif] text-[15px] leading-[19px] text-[#1a1a1a] outline-none"
              >
                <span>I have reviewed this test document, assembled, and briefed all appropriate personnel, assembled the equipment, received a </span>
                <span>written work </span>
                <mark className="bg-black text-white">permit </mark>
                <span>and am ready to begin the test.</span>
              </div>
              <div className="flex w-4 shrink-0 flex-col items-center justify-between bg-[#f8f8f8] pb-[14px] pt-4">
                <button type="button" aria-label="Text up"><Chevron up w={12} /></button>
                <button type="button" aria-label="Text down"><Chevron w={12} /></button>
              </div>
            </div>

            <div className="flex h-[39px] shrink-0 items-center pb-1 pl-[5px]">
              <label htmlFor="style" className="w-[49px]"><u>S</u>tyle:</label>
              <Select id="style" value="" className="w-[167px] border border-[#c4c4c4]" />
              <label htmlFor="font" className="ml-2 w-[49px]"><u>F</u>ont:</label>
              <Select id="font" value="Cambria" className="w-[163px] border border-[#c4c4c4]" />
              <label htmlFor="size" className="ml-[11px] w-[39px]">Si<u>z</u>e:</label>
              <Select id="size" value="" className="w-10" />
            </div>
          </div>
          <div className="h-[7px] shrink-0" />
        </section>
      </main>

      <footer className="flex h-[14px] shrink-0 items-center overflow-hidden border-b border-[#c9b9b0] pl-[6px] font-['Liberation_Sans',sans-serif]">
        <span className="whitespace-nowrap">Procedure saved to file '[DCU2-SIS-TEST-0001] I-054 Fzgo Pa Pumps PU10106 107 (480VAC)'.</span>
        <div className="ml-auto mr-1 flex items-end gap-1 self-end text-right leading-[10px]">
          <span className="h-[11px] w-11 border-l border-t-2 border-[#777] pr-2">U</span>
          <span className="h-[11px] w-11 border-l border-t-2 border-[#777] pr-2">U</span>
          <span className="h-[11px] w-[26px] border-l border-t-2 border-[#777]" />
        </div>
      </footer>

      <div className="flex h-12 shrink-0 items-center bg-[#efdad3] font-['Open_Sans','Noto_Sans',sans-serif] text-[#2a2424]">
        <div className="w-[165px] shrink-0 pl-[21px]">
          <button type="button" aria-label="Widgets, 1 notification" className="relative flex">
            <svg width="28" height="34" viewBox="0 0 28 34" aria-hidden="true">
              <rect x="1" y="8" width="20" height="19" rx="5" fill="#5b64d8" /><path d="M1 18h20v4a5 5 0 0 1-5 5H6a5 5 0 0 1-5-5z" fill="#6e55c8" /><path d="m8 12 7 5-7 5z" fill="#fff" />
            </svg>
            <span className="absolute left-[9px] top-0 flex size-4 items-center justify-center rounded-full bg-[#c42b22] text-[10px] text-white">1</span>
          </button>
        </div>
        <button type="button" aria-label="Start" className="flex w-11 shrink-0 justify-center">
          <svg width="24" height="24" viewBox="0 0 24 24" aria-hidden="true">
            <defs><linearGradient id="win" x1="0" y1="0" x2="1" y2="1"><stop offset="0" stopColor="#4cc2f5" /><stop offset="1" stopColor="#0a6fc8" /></linearGradient></defs>
            <path d="M1 1h10.500v10.500H1zM12.500 1H23v10.500H12.500zM1 12.500h10.500V23H1zM12.500 12.500H23V23H12.500z" fill="url(#win)" />
          </svg>
        </button>
        <div className="mx-1 flex h-8 w-[217px] shrink-0 items-center rounded-full border border-[#f0e2dd] bg-[#faf2ef] pl-[10px]">
          <Svg size={16}><circle cx="7" cy="7" r="5.500" stroke="#333" strokeWidth="1.600" /><path d="m11 11 4 4.500" stroke="#333" strokeWidth="1.800" /></Svg>
          <input aria-label="Search" placeholder="Search" className="ml-2 w-0 min-w-0 flex-1 bg-transparent text-[13px] outline-none placeholder:text-[#5f5653]" />
          <svg width="44" height="28" viewBox="0 0 44 28" className="mr-1 shrink-0" aria-hidden="true">
            <path d="M22 1 24 8l5-6-1 7 8-5-5 7 10-2-8 5 9 3-10 1 6 5-9-3 1 6H12l1-6-9 3 6-5-9-1 9-3-8-5 10 2-5-7 8 5-1-7 5 6z" fill="#2b96a8" />
            <path d="M22 4 24 9l6-3-2 5 7 0-5 4 5 4-7-1H16l-7 1 5-4-5-4 7 0-2-5 6 3z" fill="#1d6f88" />
            <path d="M14 14q8-6 16 0-1 9-8 12-7-3-8-12z" fill="#d9a05a" /><path d="M14 13q8-4 16 0l-2 2H16z" fill="#a89a6c" /><path d="M16 17q3-2 5 0-2 2-5 0zM23 17q3-2 5 0-3 2-5 0z" fill="#fff" /><circle cx="18.500" cy="17" r="1" fill="#322" /><circle cx="25.500" cy="17" r="1" fill="#322" /><path d="M18 21h8l-2 3h-4z" fill="#f6ead8" /><path d="m20.500 20 1.500 2 1.500-2z" fill="#533" />
          </svg>
        </div>
        {TASKS.map(([label, icon, state]) => (
          <button key={label} type="button" aria-label={label} className="flex w-11 shrink-0 justify-center">
            <span className={`flex h-10 w-[38px] flex-col items-center justify-end gap-1 rounded ${state === "active" ? "bg-[#fbf1ed]" : ""}`}>
              <span className="flex items-center">{icon}</span>
              <span className={`h-[3px] shrink-0 rounded-full ${state === "active" ? "w-4 bg-[#4c7482]" : state ? "w-[6px] bg-[#8a7f7d]" : "w-1"}`} />
            </span>
          </button>
        ))}

        <div className="ml-auto flex items-center pr-5 text-[12px]">
          <button type="button" aria-label="Hidden icons" className="mr-4"><Svg size={12}><path d="m1.500 8.500 4.500-4.500 4.500 4.500" stroke="#333" strokeWidth="1.300" /></Svg></button>
          <button type="button" aria-label="Cloud sync">
            <Svg size={18}><path d="M4 14a3.500 3.500 0 0 1 0-6.500C5 3.500 11 2 13.500 6.500 16 7 17 8 17 10l-4-1-4 5z" fill="#6f7f74" stroke="#3a4440" /><circle cx="12.500" cy="13" r="5" fill="#efdad3" /><path d="M9 12.500a3.600 3.600 0 0 1 6.500-1.500M16 13.500a3.600 3.600 0 0 1-6.500 1.500M16 9v2.500h-2.500M9 17v-2.500h2.500" stroke="#2274b8" strokeWidth="1.300" /></Svg>
          </button>
          <button type="button" className="w-[58px] text-center leading-4">ENG<br />IN</button>
          <button type="button" aria-label="Network, volume, battery" className="flex gap-[6px]">
            <Svg size={18}><path d="M1.500 8a11 11 0 0 1 15 0M4 10.500a7.500 7.500 0 0 1 10 0M6.500 13a4 4 0 0 1 5 0" stroke="#333" strokeWidth="1.300" /><circle cx="9" cy="15" r="1.500" fill="#333" /></Svg>
            <Svg size={18}><path d="M1.500 7h2.500l4-3.500v11L4 11H1.500z" stroke="#333" strokeWidth="1.100" /><path d="M10.500 7q1.500 2 0 4M12.500 5q3 4 0 8M14.500 3.500q4 5.500 0 11" stroke="#333" strokeWidth="1.100" /></Svg>
            <Svg size={18}><rect x="2" y="6" width="13" height="8" rx="1.500" stroke="#222" strokeWidth="1.500" /><path d="M15.500 8.500h1.500v3h-1.500zM8 7.500h3L9.500 13H6zM1 3h5v5H1z" fill="#222" /><path d="M2 1v3M5 1v3" stroke="#222" /></Svg>
          </button>
          <button type="button" className="ml-4 text-right leading-4">08:04<br />24-02-2025</button>
          <button type="button" aria-label="Notifications" className="ml-[7px]">
            <Svg size={16}><path d="M2 12V6q0-4 5-4.500L12 4v8l2 1.500H1z" fill="#1f1f2a" /><path d="M5.500 14.500h4" stroke="#1f1f2a" strokeWidth="2" /><path d="M10.500 1.500H14L10.500 6H14" stroke="#1f1f2a" strokeWidth="1.300" /><path d="M5 6h4M5 9h4" stroke="#efdad3" /></Svg>
          </button>
        </div>
      </div>
    </div>
  );
}
